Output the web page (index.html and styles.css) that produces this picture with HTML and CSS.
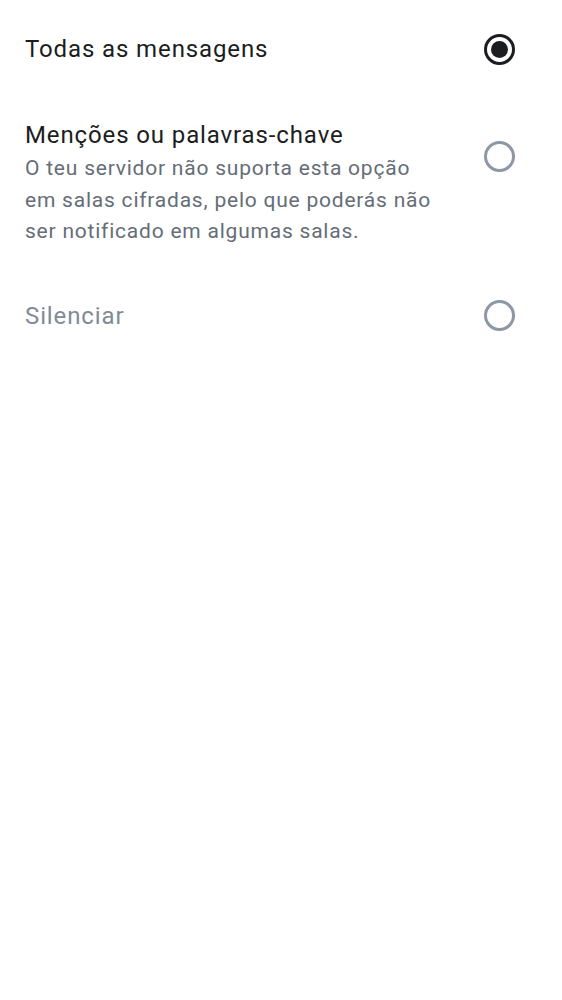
FILE: index.html
```html
<!DOCTYPE html>
<html lang="pt">
<head>
<meta charset="utf-8">
<link rel="stylesheet" href="styles.css">
</head>
<body>
<div class="list">
  <div class="row">
    <div class="text">
      <div class="title">Todas as mensagens</div>
    </div>
    <span class="radio checked"></span>
  </div>
  <div class="row top">
    <div class="text">
      <div class="title">Menções ou palavras-chave</div>
      <div class="sub">O teu servidor não suporta esta opção em salas cifradas, pelo que poderás não ser notificado em algumas salas.</div>
    </div>
    <span class="radio offset"></span>
  </div>
  <div class="row">
    <div class="text">
      <div class="title disabled">Silenciar</div>
    </div>
    <span class="radio"></span>
  </div>
</div>
</body>
</html>
```

FILE: styles.css
```css
html, body {
  margin: 0;
  padding: 0;
  background: #ffffff;
}
body {
  font-family: Roboto, "Noto Sans", sans-serif;
  width: 562px;
  height: 1000px;
}
.list {
  padding-top: 6px;
  display: flex;
  flex-direction: column;
}
.row {
  display: flex;
  align-items: center;
  padding: 25px 47px 25px 25px;
}
.row.top {
  align-items: flex-start;
}
.text {
  flex: 1;
  padding-right: 46px;
}
.title {
  font-size: 24px;
  line-height: 36px;
  color: #1b1d22;
  letter-spacing: 0.88px;
}
.title.disabled {
  color: #818a95;
}
.sub {
  font-size: 21px;
  line-height: 31.5px;
  color: #656d77;
  letter-spacing: 0.78px;
}
.radio {
  box-sizing: border-box;
  width: 31px;
  height: 31px;
  border-radius: 50%;
  border: 3px solid #8d97a5;
  display: flex;
  align-items: center;
  justify-content: center;
  flex: none;
}
.radio.offset {
  margin-top: 24px;
}
.radio.checked {
  border-color: #1b1d22;
}
.radio.checked::after {
  content: "";
  width: 17px;
  height: 17px;
  border-radius: 50%;
  background: #1b1d22;
}
```
